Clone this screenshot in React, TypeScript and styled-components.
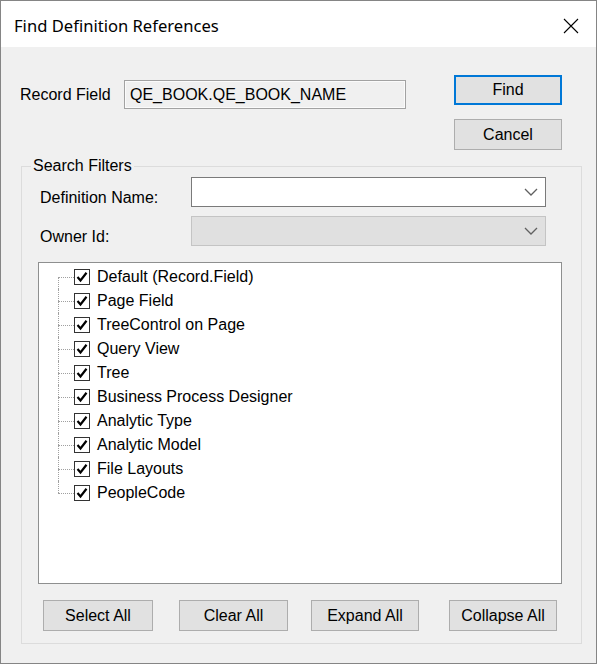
import styled, { createGlobalStyle } from 'styled-components';

const GlobalStyle = createGlobalStyle`
  html, body {
    margin: 0;
    padding: 0;
    background: #ffffff;
  }
  * {
    box-sizing: border-box;
  }
`;

const definitionTypes = [
  'Default (Record.Field)',
  'Page Field',
  'TreeControl on Page',
  'Query View',
  'Tree',
  'Business Process Designer',
  'Analytic Type',
  'Analytic Model',
  'File Layouts',
  'PeopleCode',
];

const bottomButtons = [
  { label: 'Select All', width: 110, offset: 5 },
  { label: 'Clear All', width: 109, offset: 26 },
  { label: 'Expand All', width: 108, offset: 23 },
  { label: 'Collapse All', width: 108, offset: 30 },
];

const Chevron = () => (
  <svg width="14" height="8" viewBox="0 0 14 8">
    <path d="M1 1 L7 7 L13 1" fill="none" stroke="#606060" strokeWidth="1.3" />
  </svg>
);

const CheckMark = () => (
  <svg width="14" height="14" viewBox="0 0 14 14">
    <path d="M2.5 7 L5.5 10.5 L11.5 2.8" fill="none" stroke="#000" strokeWidth="2.2" />
  </svg>
);

const CloseIcon = () => (
  <svg width="16" height="16" viewBox="0 0 16 16">
    <path d="M1 1 L15 15 M15 1 L1 15" stroke="#000" strokeWidth="1.1" />
  </svg>
);

export default function App() {
  return (
    <>
      <GlobalStyle />
      <Window>
        <TitleBar>
          <Title>Find Definition References</Title>
          <CloseButton>
            <CloseIcon />
          </CloseButton>
        </TitleBar>
        <Body>
          <TopSection>
            <RecordRow>
              <RecordLabel>Record Field</RecordLabel>
              <ReadOnlyInput>QE_BOOK.QE_BOOK_NAME</ReadOnlyInput>
            </RecordRow>
            <ActionColumn>
              <Button $width={108} $height={30} $primary>
                Find
              </Button>
              <Button $width={108} $height={31}>
                Cancel
              </Button>
            </ActionColumn>
          </TopSection>

          <GroupBox>
            <GroupLegend>Search Filters</GroupLegend>
            <FilterRow>
              <FilterLabel>Definition Name:</FilterLabel>
              <Combo>
                <Chevron />
              </Combo>
            </FilterRow>
            <FilterRow $spaced>
              <FilterLabel>Owner Id:</FilterLabel>
              <Combo $disabled>
                <Chevron />
              </Combo>
            </FilterRow>

            <TreeList>
              {definitionTypes.map((name, i) => (
                <TreeItem
                  key={name}
                  $first={i === 0}
                  $last={i === definitionTypes.length - 1}
                >
                  <Connector />
                  <CheckBox>
                    <CheckMark />
                  </CheckBox>
                  <ItemText>{name}</ItemText>
                </TreeItem>
              ))}
            </TreeList>

            <ButtonRow>
              {bottomButtons.map((b) => (
                <Button
                  key={b.label}
                  $width={b.width}
                  $height={31}
                  $offset={b.offset}
                >
                  {b.label}
                </Button>
              ))}
            </ButtonRow>
          </GroupBox>
        </Body>
      </Window>
    </>
  );
}

const Window = styled.div`
  width: 597px;
  height: 664px;
  border: 1px solid #858585;
  display: flex;
  flex-direction: column;
  font-family: 'Liberation Sans', Arial, sans-serif;
  font-size: 16px;
  color: #000;
`;

const TitleBar = styled.div`
  height: 46px;
  flex-shrink: 0;
  background: #ffffff;
  display: flex;
  align-items: center;
  justify-content: space-between;
  padding: 0 17px 0 13px;
`;

const Title = styled.span`
  font-family: 'Noto Sans', 'Open Sans', sans-serif;
  font-size: 16.6px;
  color: #000;
  padding-top: 2px;
`;

const CloseButton = styled.div`
  display: flex;
  align-items: center;
  padding-top: 3px;
`;

const Body = styled.div`
  flex: 1;
  background: #f0f0f0;
  padding: 28px 0 0 19px;
`;

const TopSection = styled.div`
  width: 562px;
  display: flex;
  align-items: flex-start;
  padding-right: 20px;
`;

const RecordRow = styled.div`
  display: flex;
  align-items: center;
  margin-top: 5px;
`;

const RecordLabel = styled.span`
  width: 104px;
  line-height: 18px;
`;

const ReadOnlyInput = styled.div`
  width: 282px;
  height: 29px;
  border: 1px solid #a2a2a2;
  box-shadow: inset 0 0 0 1px #fbfbfb;
  background: #f0f0f0;
  display: flex;
  align-items: center;
  padding-left: 5px;
  padding-top: 1px;
`;

const ActionColumn = styled.div`
  margin-left: auto;
  display: flex;
  flex-direction: column;
  gap: 14px;
`;

const Button = styled.div<{
  $width: number;
  $height: number;
  $primary?: boolean;
  $offset?: number;
}>`
  width: ${(p) => p.$width}px;
  height: ${(p) => p.$height}px;
  margin-left: ${(p) => p.$offset ?? 0}px;
  background: #e1e1e1;
  border: ${(p) => (p.$primary ? '2px solid #0078d7' : '1px solid #adadad')};
  display: flex;
  align-items: center;
  justify-content: center;
  line-height: 18px;
`;

const GroupBox = styled.fieldset`
  width: 561px;
  margin: 7px 0 0 1px;
  padding: 2px 0 12px 16px;
  border: 1px solid #dcdcdc;
  min-width: 0;
`;

const GroupLegend = styled.legend`
  margin-left: -7px;
  padding: 0 2px;
  line-height: 18px;
`;

const FilterRow = styled.div<{ $spaced?: boolean }>`
  display: flex;
  align-items: flex-start;
  margin-top: ${(p) => (p.$spaced ? '9px' : '0')};
`;

const FilterLabel = styled.span`
  width: 153px;
  padding: 12px 0 0 2px;
  line-height: 18px;
`;

const Combo = styled.div<{ $disabled?: boolean }>`
  width: 355px;
  height: 30px;
  background: ${(p) => (p.$disabled ? '#e0e0e0' : '#ffffff')};
  border: 1px solid ${(p) => (p.$disabled ? '#c4c4c4' : '#7a7a7a')};
  display: flex;
  align-items: center;
  justify-content: flex-end;
  padding-right: 7px;
`;

const TreeList = styled.div`
  width: 524px;
  height: 322px;
  margin-top: 16px;
  background: #ffffff;
  border: 1px solid #8e8f8f;
  padding-top: 2px;
`;

const TreeItem = styled.div<{ $first?: boolean; $last?: boolean }>`
  position: relative;
  height: 24px;
  display: flex;
  align-items: center;
  padding-left: 19px;

  &::before {
    content: '';
    position: absolute;
    left: 19px;
    top: ${(p) => (p.$first ? '12px' : '0')};
    bottom: ${(p) => (p.$last ? '12px' : '0')};
    border-left: 1px dotted #a0a0a0;
  }
`;

const Connector = styled.span`
  width: 16px;
  height: 1px;
  border-top: 1px dotted #a0a0a0;
  margin-top: 1px;
`;

const CheckBox = styled.span`
  width: 16px;
  height: 16px;
  border: 1px solid #333333;
  background: #ffffff;
  display: flex;
  align-items: center;
  justify-content: center;
`;

const ItemText = styled.span`
  margin-left: 7px;
  line-height: 18px;
  white-space: nowrap;
`;

const ButtonRow = styled.div`
  display: flex;
  margin-top: 16px;
`;
